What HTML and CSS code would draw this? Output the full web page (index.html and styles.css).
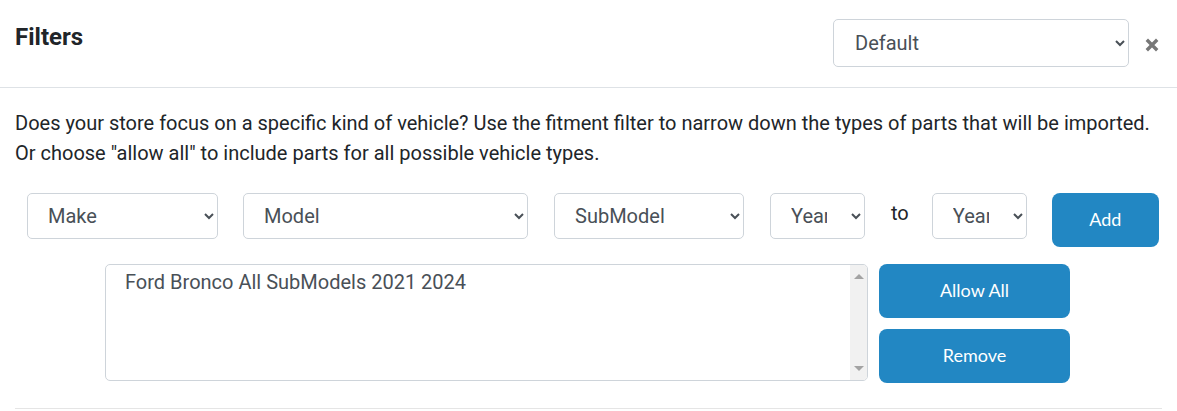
FILE: index.html
```html
<!DOCTYPE html>
<html lang="en">
<head>
<meta charset="utf-8">
<title>Filters</title>
<link rel="stylesheet" href="styles.css">
</head>
<body>
<div class="modal">
  <div class="modal-header">
    <h5 class="modal-title">Filters</h5>
    <div class="header-tools">
      <select class="form-select preset">
        <option>Default</option>
      </select>
      <button class="close" type="button" aria-label="Close">
        <svg width="14" height="14" viewBox="0 0 14 14"><path d="M1.8 1.8 L12.2 12.2 M12.2 1.8 L1.8 12.2" stroke="#777" stroke-width="3.4" stroke-linecap="butt" fill="none"/></svg>
      </button>
    </div>
  </div>
  <div class="modal-body">
    <p class="intro">Does your store focus on a specific kind of vehicle? Use the fitment filter to narrow down the types of parts that will be imported.<br>Or choose "allow all" to include parts for all possible vehicle types.</p>
    <div class="picker-row">
      <select class="form-select sel-make"><option>Make</option></select>
      <select class="form-select sel-model"><option>Model</option></select>
      <select class="form-select sel-sub"><option>SubModel</option></select>
      <select class="form-select sel-year"><option>Year</option></select>
      <span class="to">to</span>
      <select class="form-select sel-year"><option>Year</option></select>
      <button class="btn btn-add" type="button">Add</button>
    </div>
    <div class="list-row">
      <div class="list-box">
        <div class="list-items">
          <div class="list-item">Ford Bronco All SubModels 2021 2024</div>
        </div>
        <div class="scrollbar">
          <span class="arrow up"></span>
          <span class="arrow down"></span>
        </div>
      </div>
      <div class="list-actions">
        <button class="btn btn-wide" type="button">Allow All</button>
        <button class="btn btn-wide" type="button">Remove</button>
      </div>
    </div>
    <div class="footer-rule"></div>
  </div>
</div>
</body>
</html>
```
FILE: styles.css
```css
html, body {
  margin: 0;
  padding: 0;
  background: #fff;
}
body {
  font-family: Roboto, "Liberation Sans", Arial, sans-serif;
  color: #212529;
  width: 1177px;
  height: 411px;
  overflow: hidden;
}
.modal-header {
  display: flex;
  justify-content: space-between;
  align-items: flex-start;
  padding: 19px 18px 20px 15px;
  border-bottom: 1px solid #dee2e6;
}
.modal-title {
  margin: 0;
  font-size: 24px;
  line-height: 36px;
  font-weight: 700;
  color: #212529;
}
.header-tools {
  display: flex;
  align-items: center;
}
.form-select {
  font-family: Roboto, "Liberation Sans", Arial, sans-serif;
  font-size: 20px;
  color: #495057;
  background-color: #fff;
  border: 1px solid #ced4da;
  border-radius: 5px;
  padding: 0 6px 0 16px;
  box-sizing: border-box;
  height: 46px;
  margin: 0;
}
.preset {
  width: 296px;
  height: 48px;
  padding-left: 17px;
}
.close {
  margin-left: 16px;
  padding: 0;
  border: 0;
  background: transparent;
  display: flex;
  width: 14px;
  height: 14px;
  margin-top: 3px;
}
.modal-body {
  padding: 20px 15px 0;
}
.intro {
  margin: 0 0 25px;
  font-size: 20px;
  line-height: 30px;
  color: #212529;
}
.picker-row {
  display: flex;
  align-items: flex-start;
  gap: 26px;
  padding-left: 12px;
}
.sel-make { width: 191px; }
.sel-model { width: 285px; margin-left: -1px; }
.sel-sub { width: 190px; }
.sel-year { width: 95px; padding-right: 21px; }
.to {
  font-size: 20px;
  line-height: 27px;
  margin-top: 7px;
  margin-right: -3px;
  color: #212529;
}
.btn {
  font-family: Lato, "Open Sans", sans-serif;
  font-size: 18px;
  color: #fff;
  background: #2287c3;
  border: 0;
  border-radius: 8px;
  padding: 0 0 2px;
  margin: 0;
}
.btn-add {
  width: 107px;
  height: 54px;
  margin-left: -1px;
}
.list-row {
  display: flex;
  align-items: flex-start;
  gap: 11px;
  margin-top: 17px;
  padding-left: 90px;
}
.list-box {
  display: flex;
  width: 763px;
  height: 117px;
  box-sizing: border-box;
  border: 1px solid #ced4da;
  border-radius: 5px;
  overflow: hidden;
}
.list-items {
  flex: 1;
  padding: 6px 19px;
}
.list-item {
  font-size: 20px;
  line-height: 23px;
  color: #495057;
}
.scrollbar {
  width: 17px;
  background: #f1f1f1;
  display: flex;
  flex-direction: column;
  justify-content: space-between;
  align-items: center;
  padding: 9px 0 9px;
}
.arrow {
  width: 0;
  height: 0;
  border-left: 5px solid transparent;
  border-right: 5px solid transparent;
}
.arrow.up {
  border-bottom: 5px solid #a3a3a3;
}
.arrow.down {
  border-top: 5px solid #a3a3a3;
}
.list-actions {
  display: flex;
  flex-direction: column;
  gap: 11px;
}
.btn-wide {
  width: 191px;
  height: 54px;
}
.footer-rule {
  margin-top: 25px;
  border-top: 1px solid #e5e5e5;
}
```
